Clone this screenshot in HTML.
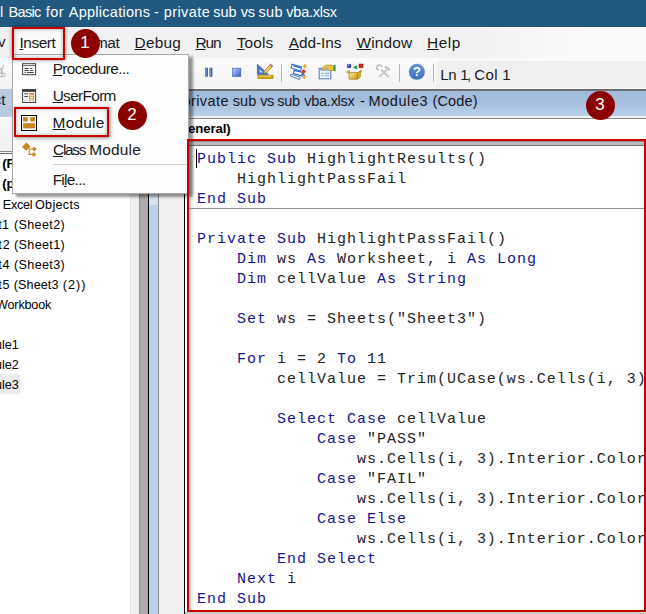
<!DOCTYPE html>
<html><head><meta charset="utf-8"><title>VBA Insert Module</title>
<style>
html,body{margin:0;padding:0;background:#fff}
#root{position:relative;width:646px;height:614px;overflow:hidden;background:#fff;font-family:"Liberation Sans",sans-serif}
#root div,#root svg{position:absolute}
.t{white-space:pre;line-height:20px;height:20px}
.t u{text-decoration-thickness:1px;text-underline-offset:1px}
.c{left:196.9px;white-space:pre;line-height:20px;height:20px;font-family:"Liberation Mono",monospace;font-size:15px;letter-spacing:0.998px;color:#242424}
.c b{font-weight:400;color:#14148e}
.red{border:2px solid #c80000;box-sizing:border-box}
.num{width:29.4px;height:29.4px;border-radius:50%;background:#8b0000;color:#fff;font-size:17px;line-height:28.4px;text-align:center;text-indent:-1px}
</style></head><body>
<div id="root">
<svg width="0" height="0" style="left:0;top:0"><defs>
<linearGradient id="gb" x1="0" y1="0" x2="1" y2="1"><stop offset="0" stop-color="#c4d3f8"/><stop offset="1" stop-color="#3556cc"/></linearGradient>
<linearGradient id="gp" x1="0" y1="0" x2="1" y2="0"><stop offset="0" stop-color="#a9bff5"/><stop offset="1" stop-color="#1c3aa8"/></linearGradient>
<linearGradient id="gh" x1="0" y1="0" x2="0" y2="1"><stop offset="0" stop-color="#6a93d8"/><stop offset="1" stop-color="#3b6cc4"/></linearGradient>
<linearGradient id="gg" x1="0" y1="0" x2="1" y2="1"><stop offset="0" stop-color="#fff3a0"/><stop offset="1" stop-color="#c99a10"/></linearGradient>
</defs></svg>

<!-- title bar -->
<div style="left:0;top:0;width:646px;height:27px;background:#20587f"></div>
<div class="t" style="left:0.00px;top:2.38px;font-size:14.5px;color:#fff;">l <span style="margin-left:1.19px;letter-spacing:-0.64px;">Basic</span> <span style="margin-left:1.11px;letter-spacing:0.45px;">for</span> <span style="margin-left:0.54px;letter-spacing:0.28px;">Applications</span> <span style="margin-left:-0.23px;">-</span> <span style="margin-left:0.78px;letter-spacing:0.44px;">private</span> <span style="margin-left:-1.04px;letter-spacing:-0.08px;">sub</span> <span style="margin-left:0.38px;letter-spacing:-0.45px;">vs</span> <span style="margin-left:0.01px;letter-spacing:0.38px;">sub</span> <span style="margin-left:-0.71px;letter-spacing:-0.26px;">vba.xlsx</span></div>

<!-- menu bar -->
<div style="left:0;top:27px;width:646px;height:31px;background:linear-gradient(90deg,#f1f1f1 0,#f1f1f1 470px,#fafafa 580px)"></div>
<div style="left:14px;top:29px;width:49px;height:29px;background:#fbfbfb"></div>
<div class="t" style="left:-2px;top:32.4px;font-size:15px;color:#1a1a1a">v</div>
<div class="t" style="left:19.40px;top:32.56px;font-size:15.4px;color:#1a1a1a;letter-spacing:-0.41px;"><u>I</u>nsert</div>
<div class="t" style="left:73.25px;top:32.56px;font-size:15.4px;color:#1a1a1a;letter-spacing:-0.47px;">F<u>o</u>rmat</div>
<div class="t" style="left:134.55px;top:32.56px;font-size:15.4px;color:#1a1a1a;letter-spacing:0.25px;"><u>D</u>ebug</div>
<div class="t" style="left:195.55px;top:32.56px;font-size:15.4px;color:#1a1a1a;letter-spacing:-1.10px;"><u>R</u>un</div>
<div class="t" style="left:236.75px;top:32.56px;font-size:15.4px;color:#1a1a1a;letter-spacing:0.11px;"><u>T</u>ools</div>
<div class="t" style="left:288.70px;top:32.56px;font-size:15.4px;color:#1a1a1a;letter-spacing:-0.03px;"><u>A</u>dd-Ins</div>
<div class="t" style="left:356.55px;top:32.56px;font-size:15.4px;color:#1a1a1a;letter-spacing:0.18px;"><u>W</u>indow</div>
<div class="t" style="left:427.05px;top:32.56px;font-size:15.4px;color:#1a1a1a;letter-spacing:0.52px;"><u>H</u>elp</div>

<!-- toolbar -->
<div style="left:0;top:57.5px;width:646px;height:31.5px;background:linear-gradient(#fbfbfb,#f2f2f2)"></div>
<div style="left:437px;top:61px;width:209px;height:27px;background:#efefef"></div>
<div style="left:281px;top:64px;width:1px;height:18px;background:#b4b4b4"></div>
<div style="left:399px;top:64px;width:1px;height:18px;background:#b4b4b4"></div>
<div style="left:433px;top:64px;width:1px;height:18px;background:#b4b4b4"></div>
<div class="t" style="left:440.35px;top:64.70px;font-size:15px;color:#1a1a1a;"><span style="letter-spacing:-0.50px;">Ln</span> <span style="margin-left:-0.05px;letter-spacing:-1.40px;">1,</span> <span style="margin-left:0.21px;letter-spacing:0.47px;">Col</span> <span style="margin-left:-0.09px;">1</span></div>
<svg style="left:0px;top:64px" width="8" height="15" viewBox="0 0 8 15" ><path d="M3.5 1 L1 9 M-1 2 L3 9" stroke="#bdbdbd" stroke-width="1.3" fill="none"/><circle cx="0.5" cy="11" r="1.8" fill="none" stroke="#bdbdbd" stroke-width="1.2"/><circle cx="3.6" cy="11" r="1.6" fill="none" stroke="#c6c6c6" stroke-width="1.1"/></svg>
<svg style="left:204px;top:66px" width="10" height="12" viewBox="0 0 10 12" ><rect x="1.35" y="2" width="2.3" height="8.6" fill="url(#gp)" stroke="#2d4cb8" stroke-width=".5"/><rect x="5.75" y="2" width="2.3" height="8.6" fill="url(#gp)" stroke="#2d4cb8" stroke-width=".5"/></svg>
<svg style="left:231px;top:66px" width="12" height="12" viewBox="0 0 12 12" ><rect x="1.5" y="2.2" width="8.3" height="8.2" fill="url(#gb)" stroke="#4565d2" stroke-width=".7"/></svg>
<svg style="left:256px;top:62px" width="19" height="18" viewBox="0 0 19 18" ><path d="M1.4 2.3 L1.4 12.4 L12.4 12.4 Z" fill="#3f6fd8" stroke="#2a50b8" stroke-width=".6"/><path d="M3.6 7.2 L3.6 10.4 L7 10.4 Z" fill="#dfe8fb"/><path d="M14.6 2.2 L16.8 4.2 L10 11.2 L7.9 11.6 L8.2 9.2 Z" fill="#f4d25a" stroke="#7a5a18" stroke-width=".6"/><path d="M14.6 2.2 L16.8 4.2 L15.6 5.4 L13.4 3.4 Z" fill="#e58a8a" stroke="#9a4a4a" stroke-width=".5"/><rect x="2" y="13.1" width="15" height="3.6" fill="#d9a514" stroke="#a97a08" stroke-width=".6"/><path d="M4 13.3v1.6M6 13.3v1.6M8 13.3v1.6M10 13.3v1.6M12 13.3v1.6M14 13.3v1.6" stroke="#fff1b8" stroke-width=".7"/></svg>
<svg style="left:289px;top:62px" width="20" height="19" viewBox="0 0 20 19" ><path d="M3 2.2 L12.5 5 L11.5 9 L2.2 6 Z" fill="#fff" stroke="#2f66d0" stroke-width="1.1"/><path d="M4.2 3.6 L11.5 5.8" stroke="#2f66d0" stroke-width="1.4"/><path d="M5 8.4 L14 10.4 L13 14 L4.5 11.6 Z" fill="#fff" stroke="#2f66d0" stroke-width="1.1"/><path d="M2 12 L11.5 15.4 L10.4 17.6 L1.4 14 Z" fill="#e8eefc" stroke="#5f7fb8" stroke-width="1"/><path d="M12.2 9.6 l2.6 -2.6 l2.2 2.6 l-2.4 2.4z" fill="#e03020"/><path d="M16 2 l1.6 2.2 l-1.6 2.2 l-1.6 -2.2z M15.2 12.6 l1.6 2.2 l-1.6 2.4 l-1.6 -2.4z" fill="#eeb030" stroke="#c88a10" stroke-width=".4"/><path d="M12 11.5 l4 1.2 l0 1 l-4 -1z" fill="#2f66d0"/></svg>
<svg style="left:317px;top:62px" width="20" height="19" viewBox="0 0 20 19" ><rect x="2.2" y="6.4" width="11.6" height="10.4" fill="#eef3fc" stroke="#4a78c8" stroke-width="1"/><rect x="2.7" y="6.9" width="10.6" height="2" fill="#9db8e8"/><path d="M4.2 11.4h2.2M7.6 11.4h4.6M4.2 13.8h2.2M7.6 13.8h4.6" stroke="#8aa4d8" stroke-width="1.1"/><path d="M4.6 6.6 L9 3 L14.5 3 L16.6 4.4 L16.6 8.4 L12.2 9 L9.6 6.2 L7 8.6 Z" fill="#e6c24a" stroke="#a8861c" stroke-width=".6"/><path d="M16.4 3.2 L18.6 2.4 L18.6 9.4 L16.4 8.8 Z" fill="#3c9a4a"/></svg>
<svg style="left:345px;top:62px" width="20" height="19" viewBox="0 0 20 19" ><circle cx="4.1" cy="4" r="2.2" fill="#2a3cc8"/><circle cx="3.5" cy="3.3" r=".8" fill="#b8c4ff"/><path d="M12.2 3 L12.2 7.6 L7.8 5.3 Z" fill="#2da048"/><rect x="14" y="2" width="4" height="3.8" fill="#d8281c" stroke="#8a1008" stroke-width=".5"/><path d="M4.6 8.2 L1.4 10.2 L4.4 11.4 Z M16 8.2 L13.2 10.6 L16.8 9.8 Z" fill="#f0d050" stroke="#a8820c" stroke-width=".6"/><path d="M4.2 10.6 L12.4 10.6 L12.4 17.2 L4.2 17.2 Z" fill="url(#gg)" stroke="#a8820c" stroke-width=".8"/><path d="M12.4 10.6 L15.4 9 L15.4 15 L12.4 17.2 Z" fill="#d8ae28" stroke="#a8820c" stroke-width=".7"/></svg>
<svg style="left:376px;top:64px" width="16" height="15" viewBox="0 0 16 15" ><path d="M5.2 5.6 L12.6 12.8" stroke="#bdbdbd" stroke-width="1.7"/><path d="M5.6 3.0 A2.5 2.5 0 1 0 3.0 5.9" stroke="#bcbcbc" stroke-width="1.5" fill="none"/><path d="M10.6 5.8 L3.2 12.8" stroke="#c6c6c6" stroke-width="1.7"/><path d="M8.2 3.4 L10.2 1.6 L14.4 5.4 L12.6 7.2 Z" fill="#c2c2c2"/></svg>
<svg style="left:408px;top:63px" width="18" height="18" viewBox="0 0 18 18" ><circle cx="8.9" cy="8.8" r="8" fill="url(#gh)"/><text x="8.9" y="13.4" text-anchor="middle" font-family="Liberation Sans, sans-serif" font-weight="700" font-size="13" fill="#fff">?</text></svg>

<!-- project panel (left) -->
<div style="left:0;top:89px;width:131px;height:28px;background:#bbcbdf"></div>
<div class="t" style="left:-6.3px;top:89.9px;font-size:15px;color:#0c1430">ct</div>
<div style="left:0;top:117px;width:131px;height:34px;background:linear-gradient(#f9f9f9,#efefef)"></div>
<div style="left:0;top:151px;width:131px;height:1px;background:#828994"></div>
<div style="left:0;top:152px;width:131px;height:462px;background:#fff"></div>
<div style="left:0;top:153px;width:131px;height:1px;background:#6a6a6a"></div>
<div style="left:130px;top:89px;width:1px;height:525px;background:#e3e3e3"></div>
<div style="left:0;top:374px;width:20px;height:20px;background:#ececec"></div>
<div class="t" style="left:2.2px;top:154.2px;font-size:13.2px;font-weight:700;color:#000">(F</div>
<div class="t" style="left:2.2px;top:174.2px;font-size:13.2px;font-weight:700;color:#000">(p</div>
<div class="t" style="left:2.80px;top:194.53px;font-size:12.6px;color:#000;"><span style="letter-spacing:-0.28px;">Excel</span> <span style="margin-left:-0.71px;letter-spacing:0.31px;">Objects</span></div>
<div class="t" style="left:-1.85px;top:214.53px;font-size:12.6px;color:#000;"><span style="letter-spacing:0.45px;">t1</span> <span style="margin-left:0.89px;letter-spacing:0.36px;">(Sheet2)</span></div>
<div class="t" style="left:-1.85px;top:234.53px;font-size:12.6px;color:#000;"><span style="letter-spacing:1.10px;">t2</span> <span style="margin-left:-0.40px;letter-spacing:0.36px;">(Sheet1)</span></div>
<div class="t" style="left:-1.85px;top:254.53px;font-size:12.6px;color:#000;"><span style="letter-spacing:0.80px;">t4</span> <span style="margin-left:0.19px;letter-spacing:0.36px;">(Sheet3)</span></div>
<div class="t" style="left:-1.85px;top:274.53px;font-size:12.6px;color:#000;"><span style="letter-spacing:0.85px;">t5</span> <span style="margin-left:-0.00px;letter-spacing:0.07px;">(Sheet3</span> <span style="margin-left:0.69px;letter-spacing:1.10px;">(2))</span></div>
<div class="t" style="left:-3.95px;top:294.53px;font-size:12.6px;color:#000;letter-spacing:-0.18px;">Workbook</div>
<div class="t" style="left:-5px;top:334.5px;font-size:12.6px;color:#000">ule1</div>
<div class="t" style="left:-5px;top:354.5px;font-size:12.6px;color:#000">ule2</div>
<div class="t" style="left:-5px;top:374.5px;font-size:12.6px;color:#000">ule3</div>

<!-- splitter columns -->
<div style="left:131px;top:89px;width:8px;height:525px;background:#f0f0f0"></div>
<div style="left:139px;top:89px;width:9px;height:525px;background:#ababab;border-left:1px solid #8c8c8c;box-sizing:border-box"></div>
<div style="left:148px;top:89px;width:1px;height:525px;background:#000"></div>
<div style="left:149px;top:89px;width:8.5px;height:525px;background:#b9d1ea"></div>
<div style="left:149px;top:89px;width:8.5px;height:116px;background:#d5e3f3"></div>
<div style="left:157.5px;top:89px;width:1px;height:525px;background:#8a8a8a"></div>
<div style="left:158.5px;top:89px;width:26px;height:525px;background:#f0f0f0"></div>
<div style="left:184px;top:89px;width:1px;height:525px;background:#000"></div>

<!-- code window -->
<div style="left:185px;top:88px;width:461px;height:1px;background:#fafafa"></div>
<div style="left:185px;top:89px;width:461px;height:2px;background:linear-gradient(#5f5f5f,#7d7d7d)"></div>
<div style="left:185px;top:91px;width:461px;height:25px;background:linear-gradient(#a0bbdb 0,#a3bddc 40%,#b9d1eb 100%)"></div>
<div style="left:185px;top:116px;width:461px;height:1.5px;background:#f3f3f3"></div>
<div style="left:185px;top:117.5px;width:461px;height:1.2px;background:#8a8a8a"></div>
<div style="left:185px;top:118.7px;width:461px;height:500px;background:#fff"></div>
<div class="t" style="left:182.50px;top:90.98px;font-size:14.5px;color:#16161e;"><span style="letter-spacing:0.41px;">private</span> <span style="margin-left:-0.13px;letter-spacing:0.02px;">sub</span> <span style="margin-left:0.07px;letter-spacing:-0.65px;">vs</span> <span style="margin-left:-0.28px;letter-spacing:-0.28px;">sub</span> <span style="margin-left:0.37px;letter-spacing:-0.26px;">vba.xlsx</span> <span style="margin-left:1.36px;">-</span> <span style="margin-left:-0.37px;letter-spacing:0.59px;">Module3</span> <span style="margin-left:0.16px;letter-spacing:0.14px;">(Code)</span></div>
<div class="t" style="left:188.10px;top:119.03px;font-size:13.2px;color:#000;font-weight:700;letter-spacing:-0.13px;">eneral)</div>
<div style="left:189px;top:141px;width:455px;height:5px;background:#b9bdbd;border-top:1px solid #8c8c8c;border-bottom:1px solid #747474;box-sizing:border-box"></div>
<div style="left:189px;top:146px;width:5px;height:464px;background:linear-gradient(90deg,#b8bcbc,#e4e6e6 50%,#fff)"></div>
<div style="left:189px;top:208px;width:457px;height:1px;background:#8f8f8f"></div>
<div style="left:196px;top:149px;width:1px;height:19px;background:#000"></div>
<div style="left:0;top:0;width:644px;height:614px;overflow:hidden">
<div class="c" style="top:150.10px"><b>Public</b> <b>Sub</b> HighlightResults()</div>
<div class="c" style="top:170.10px">    HighlightPassFail</div>
<div class="c" style="top:190.10px"><b>End</b> <b>Sub</b></div>
<div class="c" style="top:230.10px"><b>Private</b> <b>Sub</b> HighlightPassFail()</div>
<div class="c" style="top:250.10px">    <b>Dim</b> ws <b>As</b> Worksheet, i <b>As</b> <b>Long</b></div>
<div class="c" style="top:270.10px">    <b>Dim</b> cellValue <b>As</b> <b>String</b></div>
<div class="c" style="top:310.10px">    <b>Set</b> ws = Sheets(&quot;Sheet3&quot;)</div>
<div class="c" style="top:350.10px">    <b>For</b> i = 2 <b>To</b> 11</div>
<div class="c" style="top:370.10px">        cellValue = Trim(UCase(ws.Cells(i, 3)</div>
<div class="c" style="top:410.10px">        <b>Select</b> <b>Case</b> cellValue</div>
<div class="c" style="top:430.10px">            <b>Case</b> &quot;PASS&quot;</div>
<div class="c" style="top:450.10px">                ws.Cells(i, 3).Interior.Color</div>
<div class="c" style="top:470.10px">            <b>Case</b> &quot;FAIL&quot;</div>
<div class="c" style="top:490.10px">                ws.Cells(i, 3).Interior.Color</div>
<div class="c" style="top:510.10px">            <b>Case</b> <b>Else</b></div>
<div class="c" style="top:530.10px">                ws.Cells(i, 3).Interior.Color</div>
<div class="c" style="top:550.10px">        <b>End</b> <b>Select</b></div>
<div class="c" style="top:570.10px">    <b>Next</b> i</div>
<div class="c" style="top:590.10px"><b>End</b> <b>Sub</b></div>
</div>
<div style="left:185px;top:612px;width:461px;height:2px;background:#c9cccc"></div>

<!-- dropdown menu -->
<div style="left:12px;top:54px;width:176.5px;height:139.6px;background:#fdfdfd;border:1px solid #a8a8a8;box-sizing:border-box;box-shadow:4px 3px 2.5px rgba(0,0,0,.42)"></div>
<div style="left:53px;top:164px;width:134px;height:1px;background:#d0d0d0"></div>
<div class="t" style="left:52.65px;top:59.46px;font-size:15.4px;color:#1a1a1a;letter-spacing:-0.60px;"><u>P</u>rocedure...</div>
<div class="t" style="left:52.65px;top:85.76px;font-size:15.4px;color:#1a1a1a;letter-spacing:-0.66px;"><u>U</u>serForm</div>
<div class="t" style="left:52.55px;top:113.06px;font-size:15.4px;color:#1a1a1a;letter-spacing:0.26px;"><u>M</u>odule</div>
<div class="t" style="left:53.05px;top:140.26px;font-size:15.4px;color:#1a1a1a;"><span style="letter-spacing:-1.26px;"><u>C</u>lass</span> <span style="margin-left:-0.27px;letter-spacing:0.20px;">Module</span></div>
<div class="t" style="left:52.65px;top:169.66px;font-size:15.4px;color:#1a1a1a;letter-spacing:-0.72px;">Fi<u>l</u>e...</div>
<svg style="left:21px;top:62px" width="17" height="15" viewBox="0 0 17 15" ><rect x="1.6" y="1.7" width="13" height="11" fill="#fff" stroke="#404040" stroke-width="1"/><path d="M1.6 3.6h13" stroke="#404040" stroke-width=".8"/><path d="M3.4 6.5h4.4M9.3 6.5h2M3.4 8.5h4.4M9.3 8.5h2.8M3.4 10.5h1.4M6.2 10.5h6.5" stroke="#404040" stroke-width="1"/></svg>
<svg style="left:21px;top:88px" width="17" height="16" viewBox="0 0 17 16" ><rect x="1.6" y="1.5" width="13" height="13" fill="#fff" stroke="#404040" stroke-width="1"/><rect x="1.6" y="1.5" width="13" height="2.4" fill="#404040"/><rect x="2.6" y="10.4" width="4.6" height="3.2" fill="#eaeaea"/><path d="M3.2 5.8h3.8M3.2 8.6h3.8" stroke="#404040" stroke-width="1"/><rect x="8.2" y="5" width="4.8" height="1.7" fill="#c9851c"/><rect x="8.6" y="8.2" width="4" height="2.6" fill="#fff" stroke="#c9851c" stroke-width="1"/><path d="M8.2 12.7h1.9M11.2 12.7h1.9" stroke="#c9851c" stroke-width="1"/></svg>
<svg style="left:20px;top:114px" width="18" height="18" viewBox="0 0 18 18" ><rect x="1.5" y="1.5" width="15" height="15" fill="#fff" stroke="#000" stroke-width="1"/><rect x="3.1" y="3.1" width="4.6" height="4.4" fill="#c9851c"/><rect x="10.2" y="3.1" width="4.8" height="4.4" fill="#c9851c"/><rect x="3.1" y="9.2" width="11.9" height="5.2" fill="#c9851c"/></svg>
<svg style="left:20px;top:141px" width="18" height="18" viewBox="0 0 18 18" ><path d="M6.4 1.6 L10.6 5.4 L6.2 9.8 L2 6 Z" fill="#c9851c"/><path d="M14.2 5.8 L16.6 8 L14.2 10.4 L11.8 8 Z M13.8 11.2 L16.2 13.4 L13.8 15.8 L11.4 13.4 Z" fill="#c9851c"/><path d="M8.6 8 L12 8 M9.2 8 L9.2 13.4 L12 13.4" stroke="#c9851c" stroke-width="1.1" fill="none"/></svg>

<!-- annotations -->
<div class="red" style="left:12px;top:27px;width:53px;height:33px;box-shadow:0 0 4px rgba(0,0,0,.45), inset 0 0 4px rgba(0,0,0,.35)"></div>
<div class="red" style="left:14px;top:107.2px;width:95px;height:29.6px;box-shadow:1px 1px 4px rgba(0,0,0,.45), inset 0 0 4px rgba(0,0,0,.3)"></div>
<div class="red" style="left:187px;top:139px;width:459px;height:473px"></div>
<div class="num" style="left:70.9px;top:28.8px">1</div>
<div class="num" style="left:117.8px;top:100.8px">2</div>
<div class="num" style="left:585.8px;top:90.7px">3</div>
</div>
</body></html>
